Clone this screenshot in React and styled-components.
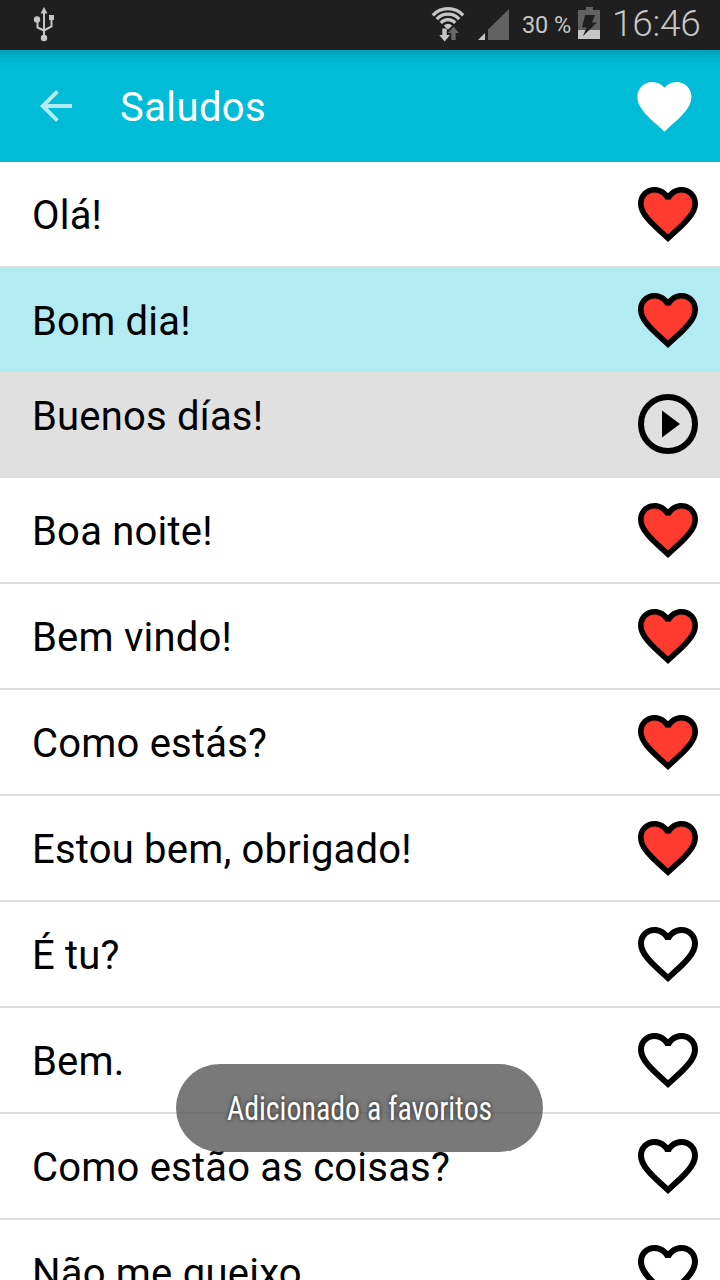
import styled, { createGlobalStyle } from "styled-components";

const GlobalStyle = createGlobalStyle`
  * {
    box-sizing: border-box;
  }
  body {
    margin: 0;
    background: #ffffff;
    font-family: Roboto, "Liberation Sans", sans-serif;
  }
`;

const Screen = styled.div`
  position: relative;
  width: 720px;
  height: 1280px;
  overflow: hidden;
  background: #ffffff;
`;

const StatusBar = styled.div`
  display: flex;
  align-items: center;
  height: 50px;
  padding: 0 20px 0 32px;
  background: #1f1f1f;
  color: #c6c6c6;
`;

const Spacer = styled.div`
  flex: none;
  width: 375px;
`;

const StatusIcon = styled.svg`
  flex: none;
  display: block;
  height: 50px;
  width: ${({ $width }) => $width}px;
  margin-left: ${({ $left }) => $left || 0}px;
`;

const BatteryLevel = styled.span`
  width: 49px;
  margin-left: 13px;
  font-size: 23.5px;
  line-height: 50px;
  letter-spacing: -0.1px;
  white-space: nowrap;
`;

const Clock = styled.span`
  margin-left: 12px;
  font-size: 37px;
  font-weight: 300;
  line-height: 48px;
  height: 50px;
  letter-spacing: -0.3px;
  white-space: nowrap;
`;

const Header = styled.header`
  display: flex;
  align-items: center;
  height: 112px;
  padding: 0 23px 0 32px;
  background: linear-gradient(rgba(0, 0, 0, 0.16), rgba(0, 0, 0, 0.04) 8px, transparent 18px) #00bcd6;
`;

const Title = styled.h1`
  flex: 1;
  margin: 0 0 0 40px;
  padding-top: 3px;
  color: #ffffff;
  font-size: 40px;
  font-weight: 400;
  line-height: 48px;
  letter-spacing: 0.4px;
`;

const Icon = styled.svg`
  flex: none;
  display: block;
  width: ${({ $size }) => $size}px;
  height: ${({ $size }) => $size}px;
`;

const List = styled.ul`
  margin: 0;
  padding: 0;
  list-style: none;
`;

const Row = styled.li`
  display: flex;
  align-items: center;
  justify-content: space-between;
  height: ${({ $selected }) => ($selected ? 104 : 106)}px;
  padding: 0 16px 0 32px;
  background: ${({ $selected }) => ($selected ? "#b2ebf2" : "#ffffff")};
  border-bottom: ${({ $selected }) => ($selected ? "0" : "2px solid #e0e0e0")};
`;

const Translation = styled(Row)`
  background: #e0e0e0;
`;

const Phrase = styled.span`
  font-size: 40px;
  line-height: 48px;
  letter-spacing: 0.2px;
  color: #000000;
  white-space: nowrap;
  padding-top: ${({ $raised }) => ($raised ? 0 : 4)}px;
  padding-bottom: ${({ $raised }) => ($raised ? 14 : 0)}px;
`;

const Toast = styled.div`
  position: absolute;
  left: 176px;
  top: 1064px;
  display: flex;
  align-items: center;
  justify-content: center;
  width: 367px;
  height: 88px;
  border-radius: 44px;
  background: rgba(88, 88, 88, 0.8);
`;

const ToastText = styled.span`
  padding-top: 2px;
  color: #ffffff;
  font-size: 33px;
  font-weight: 450;
  font-stretch: 75%;
  line-height: 40px;
  white-space: nowrap;
  text-shadow: 0 0 5px rgba(0, 0, 0, 0.7);
  transform: scaleX(0.905);
`;

const phrases = [
  { text: "Olá!", favorite: true },
  { text: "Bom dia!", favorite: true, translation: "Buenos días!" },
  { text: "Boa noite!", favorite: true },
  { text: "Bem vindo!", favorite: true },
  { text: "Como estás?", favorite: true },
  { text: "Estou bem, obrigado!", favorite: true },
  { text: "É tu?" },
  { text: "Bem." },
  { text: "Como estão as coisas?" },
  { text: "Não me queixo." },
];

const HEART =
  "M12 21.35l-1.45-1.32C5.4 15.36 2 12.28 2 8.5 2 5.42 4.42 3 7.5 3c1.74 0 3.41.81 4.5 2.09C13.09 3.81 14.76 3 16.5 3 19.58 3 22 5.42 22 8.5c0 3.78-3.4 6.86-8.55 11.54L12 21.35z";
const HEART_INNER =
  "M12.1 18.55l-.1.1-.1-.1C7.14 14.24 4 11.39 4 8.5 4 6.5 5.5 5 7.5 5c1.54 0 3.04.99 3.57 2.36h1.87C13.46 5.99 14.96 5 16.5 5c2 0 3.5 1.5 3.5 3.5 0 2.89-3.14 5.74-7.9 10.05z";

const Favorite = ({ active }) => (
  <Icon $size={72} viewBox="0 0 24 24">
    {active ? (
      <>
        <path d={HEART} fill="#000" />
        <path d={HEART_INNER} fill="#ff3b2f" stroke="#ff3b2f" strokeWidth="0.3" />
      </>
    ) : (
      <path d={HEART + HEART_INNER} fill="#000" fillRule="evenodd" />
    )}
  </Icon>
);

const Play = () => (
  <Icon $size={72} viewBox="0 0 24 24">
    <circle cx="12" cy="12" r="9" fill="none" stroke="#000" strokeWidth="2" />
    <path d="M10 16.5l6-4.5-6-4.5z" />
  </Icon>
);

const Usb = () => (
  <StatusIcon $width={24} viewBox="32 0 24 50" fill="#c6c6c6">
    <path d="M44 7l3.5 6.5h-7z" />
    <path d="M44 12v26M37.5 20v7.5l6.5 3M51.5 18v8.5L44 30.5" fill="none" stroke="#c6c6c6" strokeWidth="2" />
    <circle cx="37" cy="19.5" r="3.2" />
    <path d="M49 15h5v5h-5z" />
    <circle cx="44" cy="38" r="3.2" />
  </StatusIcon>
);

const Wifi = () => (
  <StatusIcon $width={34} viewBox="431 0 34 50">
    <g fill="none" stroke="#c6c6c6" strokeWidth="3.2">
      <path d="M432.8 15.3A20.8 20.8 0 0 1 463.2 15.3" />
      <path d="M436.8 19.1A15.3 15.3 0 0 1 459.2 19.1" />
      <path d="M440.8 22.8A9.8 9.8 0 0 1 455.2 22.8" />
    </g>
    <path d="M443.8 25.7A5.5 5.5 0 0 1 452.2 25.7L448 29.5z" fill="#c6c6c6" />
    <path d="M442.3 28.5h4.4V35h3.300l-5.400 6.500-5.400-6.500h3.100z" fill="#c6c6c6" />
    <path d="M451.300 40v-7h-3.300l5.500-6.500 5.500 6.500h-3.300v7z" fill="#666" />
  </StatusIcon>
);

const Signal = () => (
  <StatusIcon $width={31} $left={13} viewBox="478 0 31 50">
    <path d="M509 9v31h-21V29.5z" fill="#626262" />
    <path d="M485 33v7h-7z" fill="#c6c6c6" />
  </StatusIcon>
);

const Battery = () => (
  <StatusIcon $width={22} $left={7} viewBox="578 0 22 50">
    <path d="M586 7h7v3h7v20h-22V10h8z" fill="#626262" />
    <path d="M578 30h22v9h-22z" fill="#c6c6c6" />
    <path d="M585 15h10l-3 7.5h5L583 36l3.5-8.5h-4.500z" fill="#1f1f1f" />
  </StatusIcon>
);

const Item = ({ phrase }) => (
  <>
    <Row $selected={Boolean(phrase.translation)}>
      <Phrase>{phrase.text}</Phrase>
      <Favorite active={phrase.favorite} />
    </Row>
    {phrase.translation && (
      <Translation>
        <Phrase $raised>{phrase.translation}</Phrase>
        <Play />
      </Translation>
    )}
  </>
);

const App = () => {
  return (
    <>
      <GlobalStyle />
      <Screen>
        <StatusBar>
          <Usb />
          <Spacer />
          <Wifi />
          <Signal />
          <BatteryLevel>30 %</BatteryLevel>
          <Battery />
          <Clock>16:46</Clock>
        </StatusBar>
        <Header>
          <Icon $size={48} viewBox="0 0 24 24" fill="#b2ebf2">
            <path d="M20 11H7.83l5.59-5.59L12 4l-8 8 8 8 1.41-1.41L7.83 13H20z" />
          </Icon>
          <Title>Saludos</Title>
          <Icon $size={64.8} viewBox="0 0 24 24" fill="#fff">
            <path d={HEART} />
          </Icon>
        </Header>
        <List>
          {phrases.map((phrase) => (
            <Item key={phrase.text} phrase={phrase} />
          ))}
        </List>
        <Toast>
          <ToastText>Adicionado a favoritos</ToastText>
        </Toast>
      </Screen>
    </>
  );
};

export default App;
